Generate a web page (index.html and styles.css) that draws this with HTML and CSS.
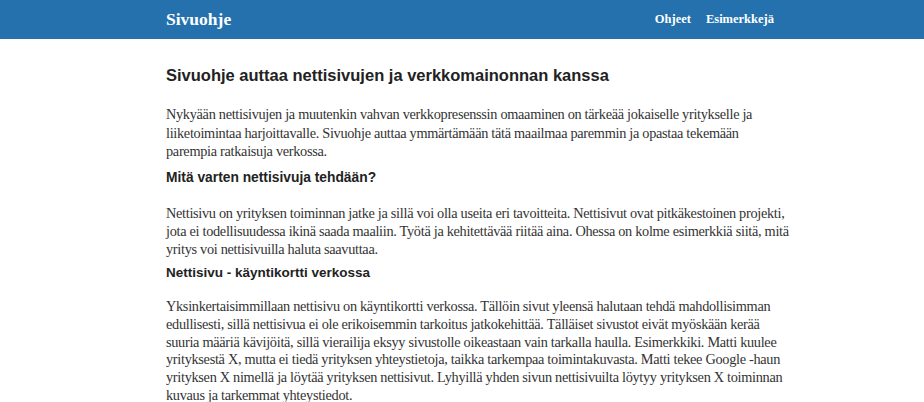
FILE: index.html
```html
<!DOCTYPE html>
<html lang="fi">
<head>
<meta charset="utf-8">
<title>Sivuohje</title>
<link rel="stylesheet" href="styles.css">
</head>
<body>
<header class="topbar">
  <div class="container topbar-inner">
    <a class="brand" href="#">Sivuohje</a>
    <nav class="nav">
      <a href="#">Ohjeet</a>
      <a href="#">Esimerkkejä</a>
    </nav>
  </div>
</header>
<main class="container content">
  <h1>Sivuohje auttaa nettisivujen ja verkkomainonnan kanssa</h1>
  <p class="p-first">Nykyään nettisivujen ja muutenkin vahvan verkkopresenssin omaaminen on tärkeää jokaiselle yritykselle ja<br>
  liiketoimintaa harjoittavalle. Sivuohje auttaa ymmärtämään tätä maailmaa paremmin ja opastaa tekemään<br>
  parempia ratkaisuja verkossa.</p>
  <h2>Mitä varten nettisivuja tehdään?</h2>
  <p>Nettisivu on yrityksen toiminnan jatke ja sillä voi olla useita eri tavoitteita. Nettisivut ovat pitkäkestoinen projekti,<br>
  jota ei todellisuudessa ikinä saada maaliin. Työtä ja kehitettävää riitää aina. Ohessa on kolme esimerkkiä siitä, mitä<br>
  yritys voi nettisivuilla haluta saavuttaa.</p>
  <h3>Nettisivu - käyntikortti verkossa</h3>
  <p class="p-tight">Yksinkertaisimmillaan nettisivu on käyntikortti verkossa. Tällöin sivut yleensä halutaan tehdä mahdollisimman<br>
  edullisesti, sillä nettisivua ei ole erikoisemmin tarkoitus jatkokehittää. Tälläiset sivustot eivät myöskään kerää<br>
  suuria määriä kävijöitä, sillä vierailija eksyy sivustolle oikeastaan vain tarkalla haulla. Esimerkkiki. Matti kuulee<br>
  yrityksestä X, mutta ei tiedä yrityksen yhteystietoja, taikka tarkempaa toimintakuvasta. Matti tekee Google -haun<br>
  yrityksen X nimellä ja löytää yrityksen nettisivut. Lyhyillä yhden sivun nettisivuilta löytyy yrityksen X toiminnan<br>
  kuvaus ja tarkemmat yhteystiedot.</p>
</main>
</body>
</html>
```
FILE: styles.css
```css
html, body {
  margin: 0;
  padding: 0;
  background: #ffffff;
}
body {
  font-family: "Liberation Serif", "Times New Roman", serif;
  font-size: 14.3px;
  letter-spacing: -0.3px;
  line-height: 18.2px;
  color: #333333;
}
.container {
  width: 608px;
  margin: 0 auto;
  padding: 0 0 0 16px;
}
.topbar {
  background: #2471ae;
  height: 39px;
  color: #ffffff;
}
.topbar-inner {
  display: flex;
  align-items: center;
  justify-content: space-between;
  height: 39px;
}
.brand {
  font-family: "Liberation Serif", Georgia, serif;
  font-weight: bold;
  font-size: 17.5px;
  letter-spacing: 0;
  color: #ffffff;
  text-decoration: none;
}
.nav {
  display: flex;
  gap: 15px;
}
.nav a {
  font-family: "Liberation Serif", Georgia, serif;
  font-weight: bold;
  font-size: 12.5px;
  letter-spacing: 0;
  color: #ffffff;
  text-decoration: none;
}
.content {
  padding-top: 26px;
}
h1, h2, h3 {
  font-family: "Liberation Sans", Arial, sans-serif;
  font-weight: bold;
  letter-spacing: 0;
  color: #222222;
  margin: 0;
}
h1 {
  font-size: 16.5px;
  line-height: 20px;
  margin-bottom: 20px;
}
.p-first {
  line-height: 18.5px;
}
h2 {
  font-size: 13.8px;
  line-height: 20px;
  margin-top: 7px;
  margin-bottom: 16px;
}
h3 {
  font-size: 13.5px;
  line-height: 20px;
  margin-top: 5px;
  margin-bottom: 15px;
}
p {
  margin: 0;
  white-space: nowrap;
}
.p-tight {
  line-height: 17.7px;
}
```
